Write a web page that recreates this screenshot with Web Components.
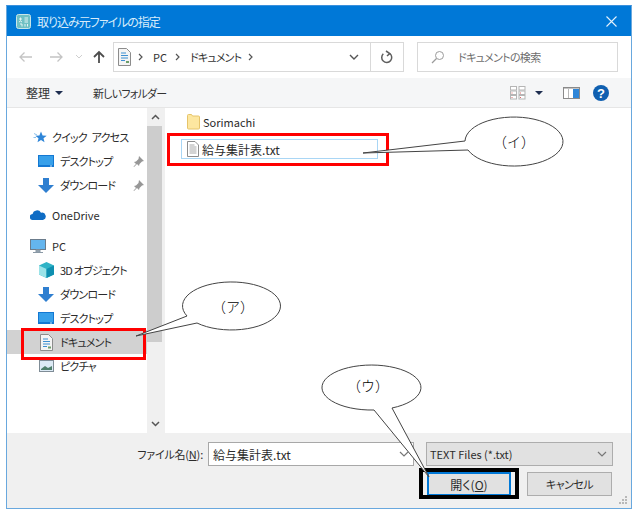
<!DOCTYPE html>
<html lang="ja">
<head>
<meta charset="utf-8">
<title>取り込み元ファイルの指定</title>
<style>
  html, body { margin: 0; padding: 0; background: #fff; }
  body { width: 637px; height: 516px; overflow: hidden; font-family: "Noto Sans CJK JP", "Noto Sans", sans-serif; }
</style>
</head>
<body>
<open-dialog>
  <title-bar slot="title">取り込み元ファイルの指定</title-bar>
  <nav-bar slot="nav"></nav-bar>
  <tool-bar slot="tools"></tool-bar>
  <side-nav slot="side"></side-nav>
  <file-list slot="files"></file-list>
  <dialog-footer slot="footer"></dialog-footer>

  <mark-box slot="over" style="left:21px;top:328px;width:125px;height:32px"></mark-box>
  <mark-box slot="over" style="left:167px;top:133px;width:222px;height:33px"></mark-box>
  <mark-box slot="over" color="#000" size="4" style="left:419px;top:468px;width:100px;height:31px"></mark-box>

  <call-out slot="over" d="M187 316 A49 24 0 1 1 197 323 L136 336 Z" tx="233" ty="306">（ア）</call-out>
  <call-out slot="over" d="M465 141 A49 24.500 0 1 1 468 150 L363 153 Z" tx="514" ty="141">（イ）</call-out>
  <call-out slot="over" d="M392 408 A49.500 22.500 0 1 0 374 410 L429 477 Z" tx="368" ty="385">（ウ）</call-out>
</open-dialog>

<script>
const UI_FONT = `"Noto Sans CJK JP", "Noto Sans", sans-serif`;

class OpenDialog extends HTMLElement {
  constructor() {
    super();
    this.attachShadow({ mode: "open" });
    this.shadowRoot.innerHTML = `
      <style>
        :host {
          display: grid;
          grid-template-rows: 30px 42px 30px 325px 75px;
          grid-template-columns: 140px 1fr;
          box-sizing: border-box;
          width: 626px;
          height: 504px;
          margin: 5px 0 0 6px;
          border: 1px solid #69a8de;
          border-top: 1px solid #3b90dc;
          background: #fff;
          font: 12px ${UI_FONT};
          font-feature-settings: "palt";
          color: #2b2b2b;
        }
        .wide { grid-column: 1 / 3; }
        #over { position: absolute; left: 0; top: 0; }
      </style>
      <div class="wide"><slot name="title"></slot></div>
      <div class="wide"><slot name="nav"></slot></div>
      <div class="wide"><slot name="tools"></slot></div>
      <div><slot name="side"></slot></div>
      <div><slot name="files"></slot></div>
      <div class="wide"><slot name="footer"></slot></div>
      <div id="over"><slot name="over"></slot></div>
    `;
  }
}

class TitleBar extends HTMLElement {
  constructor() {
    super();
    this.attachShadow({ mode: "open" });
    this.shadowRoot.innerHTML = `
      <style>
        :host {
          display: flex;
          align-items: center;
          height: 30px;
          padding: 0 13px 0 9px;
          background: #0078d7;
          color: #d8ecfa;
          font-size: 12px;
          letter-spacing: -1px;
        }
        svg { display: block; }
        .text { margin-left: 6px; flex: 1; }
      </style>
      <svg width="15" height="15" viewBox="0 0 15 15">
        <rect x=".5" y=".5" width="14" height="14" rx="2" fill="#6fc0c4" stroke="#c9e6e8"/>
        <path d="M3 5h3M4.500 3.500v3M3 8l1.500-1 1.500 1M8.500 4h3.500M8.500 6h3.500M8.500 8h3.500M4 10h2v2.500M9 10v2.500M11.500 10v2.500" stroke="#e4f4f3" fill="none"/>
      </svg>
      <span class="text"><slot></slot></span>
      <svg width="13" height="13" viewBox="0 0 13 13"><path d="M1.500 1.500l10 10M11.500 1.500l-10 10" stroke="#e6f2fb" stroke-width="1.100"/></svg>
    `;
  }
}

class NavBar extends HTMLElement {
  constructor() {
    super();
    this.attachShadow({ mode: "open" });
    const sep = `<svg class="sep" width="6" height="8" viewBox="0 0 6 8"><path d="M1 1l3 3-3 3" stroke="#555" fill="none" stroke-width="1.200"/></svg>`;
    this.shadowRoot.innerHTML = `
      <style>
        :host {
          display: flex;
          align-items: center;
          height: 42px;
          padding-left: 11px;
          background: #fff;
          box-sizing: border-box;
          font-size: 11px;
          letter-spacing: -.8px;
        }
        svg { display: block; flex: none; }
        .box {
          display: flex;
          align-items: center;
          box-sizing: border-box;
          height: 30px;
          border: 1px solid #d9d9d9;
        }
        #addr { width: 291px; margin-left: 7px; padding-left: 4px; }
        .crumb { color: #333; }
        .pc { letter-spacing: 0; }
        .sep { margin: 0 9px 0 7px; }
        .grow { flex: 1; }
        .btn { display: flex; align-items: center; justify-content: center; height: 100%; }
        #drop { width: 32px; }
        #refresh { width: 32px; border-left: 1px solid #d9d9d9; height: 100%; }
        #search { width: 201px; margin-left: 13px; padding-left: 13px; color: #6d6d6d; letter-spacing: -.7px; }
        #search span { margin-left: 13px; }
      </style>
      <svg width="16" height="12" viewBox="0 0 16 12"><path d="M14 6H2M6.500 1.500L2 6l4.500 4.500" stroke="#c4c4c4" fill="none" stroke-width="1.300"/></svg>
      <svg style="margin-left:14px" width="16" height="12" viewBox="0 0 16 12"><path d="M2 6h12M9.500 1.500L14 6l-4.500 4.500" stroke="#c4c4c4" fill="none" stroke-width="1.300"/></svg>
      <svg style="margin-left:11px" width="8" height="6" viewBox="0 0 8 6"><path d="M1 1l3 3 3-3" stroke="#cfcfcf" fill="none"/></svg>
      <svg style="margin-left:9px" width="14" height="14" viewBox="0 0 14 14"><path d="M7 13V2M2 7l5-5 5 5" stroke="#4d4d4d" fill="none" stroke-width="1.800"/></svg>
      <div class="box" id="addr">
        <svg width="13" height="18" viewBox="0 0 13 18">
          <path d="M.5.500h8l4 4v13H.5z" fill="#f4f4f4" stroke="#8c8c8c"/>
          <path d="M3 5h5M3 7.500h7M3 10h7M3 12.500h4" stroke="#3d8fd1" stroke-width="1.100"/>
          <path d="M8 13h3v2H8z" fill="#6e9e6a"/>
        </svg>
        ${sep}<span class="crumb pc">PC</span><span style="width:1px"></span>${sep}<span class="crumb">ドキュメント</span>${sep}
        <span class="grow"></span>
        <div class="btn" id="drop"><svg width="10" height="6" viewBox="0 0 10 6"><path d="M1 1l4 4 4-4" stroke="#555" fill="none" stroke-width="1.400"/></svg></div>
        <div class="btn" id="refresh"><svg width="14" height="15" viewBox="0 0 14 15"><path d="M3.300 3.800a5 5 0 1 0 6.500-.3M6 1l3.800 2.500L7 6" stroke="#5e5e5e" fill="none" stroke-width="1.500"/></svg></div>
      </div>
      <div class="box" id="search">
        <svg width="14" height="14" viewBox="0 0 14 14"><circle cx="8.500" cy="5.500" r="4" stroke="#9b9b9b" fill="none"/><path d="M5.500 8.500L1 13" stroke="#9b9b9b" fill="none" stroke-width="1.200"/></svg>
        <span>ドキュメントの検索</span>
      </div>
    `;
  }
}

class ToolBar extends HTMLElement {
  constructor() {
    super();
    this.attachShadow({ mode: "open" });
    const caret = `<svg width="8" height="4" viewBox="0 0 8 4"><path d="M0 0h8L4 4z" fill="#1e2e50"/></svg>`;
    const cell = (x) => `<rect x="${x}" y=".5" width="6" height="3.500" fill="#fff" stroke="#b5b5b5"/><rect x="${x}" y="5" width="6" height="3.500" fill="#fff" stroke="#b5b5b5"/><rect x="${x}" y="9.500" width="6" height="3.500" fill="#fff" stroke="#b5b5b5"/><path d="M${x+1} 11.500h1M${x+1} 7h1" stroke="#d66"/>`;
    this.shadowRoot.innerHTML = `
      <style>
        :host {
          display: flex;
          align-items: center;
          height: 30px;
          padding: 0 22px 0 19px;
          background: #f5f6f7;
          border-bottom: 1px solid #e6e6e6;
          box-sizing: border-box;
          color: #333;
        }
        svg { display: block; flex: none; }
        .grow { flex: 1; }
        .narrow { font-size: 11px; letter-spacing: -.8px; }
      </style>
      <span>整理</span>
      <svg style="margin-left:5px" width="8" height="4" viewBox="0 0 8 4"><path d="M0 0h8L4 4z" fill="#1e2e50"/></svg>
      <span class="narrow" style="margin-left:30px">新しいフォルダー</span>
      <span class="grow"></span>
      <svg width="16" height="14" viewBox="0 0 16 14">${cell(.5)}${cell(9)}</svg>
      <span style="width:9px"></span>${caret}
      <svg style="margin-left:20px" width="17" height="12" viewBox="0 0 17 12"><rect x=".5" y=".5" width="16" height="11" fill="#fff" stroke="#8a8a8a"/><path d="M.5 1h16" stroke="#8a8a8a"/><rect x="10" y="2" width="6" height="9" fill="#2f86d8"/><rect x="5" y="2" width="1" height="9" fill="#b8b8b8"/></svg>
      <svg style="margin-left:13px" width="16" height="16" viewBox="0 0 16 16"><circle cx="8" cy="8" r="8" fill="#0f5fb0"/><text x="8" y="12.500" font-family="Liberation Sans" font-size="13" font-weight="700" text-anchor="middle" fill="#fff">?</text></svg>
    `;
  }
}

const SIDE_ICONS = {
  star: `<svg width="14" height="13" viewBox="0 0 14 13"><path d="M8 .5l1.600 3.900 4.100.3-3.200 2.600 1 4-3.500-2.200-3.500 2.200 1-4L2.300 4.700l4.100-.3z" fill="#2f86d8"/><path d="M1 2.500l3 1.500M.5 6.500L3 6.500" stroke="#8cc1ec"/></svg>`,
  desktop: `<svg width="16" height="12" viewBox="0 0 16 12"><rect width="16" height="12" fill="#1478d2"/><rect x="1" y="1" width="14" height="9" fill="#37a0ea"/><path d="M12 11h2" stroke="#bfe0f7"/></svg>`,
  down: `<svg width="16" height="15" viewBox="0 0 16 15"><path d="M5 0h6v7h5l-8 8-8-8h5z" fill="#2f7fd0"/></svg>`,
  cloud: `<svg width="16" height="10" viewBox="0 0 16 10"><path d="M3 10a3 3 0 0 1-.4-6A4.500 4.500 0 0 1 11 2.800 3.500 3.500 0 0 1 13 10z" fill="#0f6cc4"/></svg>`,
  pc: `<svg width="16" height="15" viewBox="0 0 16 15"><rect x=".5" y=".5" width="15" height="10" fill="#64b5ee" stroke="#6b7c8c"/><path d="M6 11h4v2H6zM3 13.500h10" fill="#9aa8b3" stroke="#8a99a6"/></svg>`,
  cube: `<svg width="15" height="16" viewBox="0 0 15 16"><path d="M7.500 0L15 3.500v9L7.500 16 0 12.500v-9z" fill="#2fb3c6"/><path d="M0 3.500L7.500 7v9L0 12.500z" fill="#9be3e8"/><path d="M7.500 7L15 3.500v9L7.500 16z" fill="#0f8fb0"/></svg>`,
  doc: `<svg width="13" height="17" viewBox="0 0 13 17"><path d="M.5.500h8l4 4v12H.5z" fill="#f4f4f4" stroke="#8c8c8c"/><path d="M3 5h5M3 7.500h7M3 10h7M3 12.500h4" stroke="#3d8fd1" stroke-width="1.100"/><path d="M8 12.500h3v2H8z" fill="#6e9e6a"/></svg>`,
  pic: `<svg width="15" height="12" viewBox="0 0 15 12"><rect x=".5" y=".5" width="14" height="11" fill="#dceaf5" stroke="#7f8c96"/><path d="M2 9l4-3 3 2 4-2v4H2z" fill="#4f7f6c"/></svg>`,
};

class NavItem extends HTMLElement {
  constructor() {
    super();
    this.attachShadow({ mode: "open" });
  }
  connectedCallback() {
    const icon = SIDE_ICONS[this.getAttribute("icon")];
    const pin = this.hasAttribute("pin")
      ? `<svg class="pin" width="11" height="11" viewBox="0 0 11 11"><path d="M6 0l5 5-2 .5-2.500 2.500-.5 2-2-2L1 11l-.5-.5L3 8 1 6l2-.5L5.500 3z" fill="#979797"/></svg>`
      : "";
    this.shadowRoot.innerHTML = `
      <style>
        :host {
          display: flex;
          align-items: center;
          box-sizing: border-box;
          height: 24px;
          color: #2b2b2b;
          font-size: 11px;
          letter-spacing: -.8px;
        }
        :host([selected]) { background: #d2d2d2; }
        .icon { display: flex; justify-content: center; width: 18px; flex: none; }
        svg { display: block; }
        .label { margin-left: var(--label-gap, 5px); white-space: nowrap; flex: 1; }
        .pin { margin-right: 3px; }
      </style>
      <span class="icon">${icon}</span>
      <span class="label"><slot></slot></span>
      ${pin}
    `;
  }
}

class SideNav extends HTMLElement {
  constructor() {
    super();
    this.attachShadow({ mode: "open" });
    this.shadowRoot.innerHTML = `
      <style>
        :host {
          display: block;
          box-sizing: border-box;
          width: 140px;
          height: 325px;
          padding-top: 17px;
        }
        .l1 { padding-left: 22px; }
        .l2 { padding-left: 30px; }
        .latin { letter-spacing: 0; }
        .gap { height: 6px; }
        #quick { padding-left: 24px; --label-gap: 3px; word-spacing: 3px; }
      </style>
      <nav-item id="quick" icon="star">クイック アクセス</nav-item>
      <nav-item class="l2" icon="desktop" pin>デスクトップ</nav-item>
      <nav-item class="l2" icon="down" pin>ダウンロード</nav-item>
      <div class="gap"></div>
      <nav-item class="l1 latin" icon="cloud">OneDrive</nav-item>
      <div class="gap" style="height:7px"></div>
      <nav-item class="l1 latin" icon="pc">PC</nav-item>
      <nav-item class="l2" icon="cube">3D オブジェクト</nav-item>
      <nav-item class="l2" icon="down">ダウンロード</nav-item>
      <nav-item class="l2" icon="desktop">デスクトップ</nav-item>
      <nav-item class="l2" icon="doc" selected>ドキュメント</nav-item>
      <nav-item class="l2" icon="pic">ピクチャ</nav-item>
    `;
  }
}

class FileList extends HTMLElement {
  constructor() {
    super();
    this.attachShadow({ mode: "open" });
    this.shadowRoot.innerHTML = `
      <style>
        :host {
          display: flex;
          box-sizing: border-box;
          height: 325px;
        }
        #scroll {
          display: flex;
          flex-direction: column;
          width: 17px;
          flex: none;
          background: #f0f0f0;
        }
        #scroll .end { display: flex; align-items: center; justify-content: center; height: 18px; flex: none; }
        #scroll .thumb { height: 216px; width: 15px; background: #cdcdcd; flex: none; }
        #scroll .track { flex: 1; }
        svg { display: block; flex: none; }
        #rows { flex: 1; padding: 4px 0 0 16px; background: #fff; border-left: 1px solid #f0f0f0; }
        .row {
          display: flex;
          align-items: center;
          box-sizing: border-box;
          height: 20px;
          padding-left: 6px;
          gap: 3px;
        }
        .name { font-size: 11px; }
        #picked {
          width: 197px;
          margin-top: 7px;
          border: 1px solid #a9d6f5;
          padding-left: 5px;
          gap: 3px;
        }
      </style>
      <div id="scroll">
        <div class="end"><svg width="9" height="6" viewBox="0 0 9 6"><path d="M1 5l3.500-3.500L8 5" stroke="#555" fill="none" stroke-width="1.500"/></svg></div>
        <div class="thumb"></div>
        <div class="track"></div>
        <div class="end"><svg width="9" height="6" viewBox="0 0 9 6"><path d="M1 1l3.500 3.500L8 1" stroke="#555" fill="none" stroke-width="1.500"/></svg></div>
      </div>
      <div id="rows">
        <div class="row">
          <svg width="13" height="16" viewBox="0 0 13 16"><path d="M.5 1.500a1 1 0 0 1 1-1h3l1 1.500h6a1 1 0 0 1 1 1v11a1 1 0 0 1-1 1h-10a1 1 0 0 1-1-1z" fill="#fde7a0" stroke="#e6c46a"/></svg>
          <span class="name">Sorimachi</span>
        </div>
        <div class="row" id="picked">
          <svg width="12" height="16" viewBox="0 0 12 16"><path d="M.5.500h7.500l3.500 3.500v11.500H.5z" fill="#fff" stroke="#8d8d8d"/><path d="M2.500 4h5M2.500 6h7M2.500 8h7M2.500 10h7M2.500 12h7" stroke="#a8a8a8"/></svg>
          <span>給与集計表.txt</span>
        </div>
      </div>
    `;
  }
}

class DialogFooter extends HTMLElement {
  constructor() {
    super();
    this.attachShadow({ mode: "open" });
    const chev = `<svg width="10" height="6" viewBox="0 0 10 6"><path d="M1 1l4 4 4-4" stroke="#777" fill="none" stroke-width="1.200"/></svg>`;
    this.shadowRoot.innerHTML = `
      <style>
        :host {
          display: block;
          box-sizing: border-box;
          height: 75px;
          padding-top: 9px;
          background: #f0f0f0;
          position: relative;
        }
        .line { display: flex; align-items: center; height: 24px; }
        .label {
          width: 201px;
          text-align: right;
          box-sizing: border-box;
          padding-right: 5px;
          font-size: 11px;
          letter-spacing: -.2px;
        }
        u { text-underline-offset: 1px; }
        .field {
          display: flex;
          align-items: center;
          justify-content: space-between;
          box-sizing: border-box;
          height: 24px;
          padding: 0 4px;
        }
        #name { width: 206px; background: #fff; border: 1px solid #a8a8a8; }
        #type { width: 187px; margin-left: 12px; background: #e1e1e1; border: 1px solid #adadad; padding: 0 5px 0 3px; font-size: 11px; }
        .buttons { display: flex; height: 24px; margin: 6px 0 0 420px; gap: 16px; }
        .buttons div {
          display: flex;
          align-items: center;
          justify-content: center;
          box-sizing: border-box;
          width: 84px;
          height: 24px;
          background: #e1e1e1;
          border: 1px solid #adadad;
        }
        .buttons #ok { border: 2px solid #0078d7; }
        .buttons #cancel { font-size: 11px; letter-spacing: -.5px; width: 85px; }
        #grip { position: absolute; right: 3px; bottom: 3px; display: block; }
      </style>
      <div class="line">
        <span class="label">ファイル名(<u>N</u>):</span>
        <div class="field" id="name"><span>給与集計表.txt</span>${chev}</div>
        <div class="field" id="type"><span>TEXT Files (*.txt)</span>${chev}</div>
      </div>
      <div class="buttons">
        <div id="ok"><span>開く(<u>O</u>)</span></div>
        <div id="cancel">キャンセル</div>
      </div>
      <svg id="grip" width="9" height="9" viewBox="0 0 9 9" fill="#b8b8b8"><path d="M6 0h2v2H6zM3 3h2v2H3zM6 3h2v2H6zM0 6h2v2H0zM3 6h2v2H3zM6 6h2v2H6z"/></svg>
    `;
  }
}

class MarkBox extends HTMLElement {
  constructor() {
    super();
    this.attachShadow({ mode: "open" });
  }
  connectedCallback() {
    const color = this.getAttribute("color") || "#f00";
    const size = this.getAttribute("size") || "3";
    this.shadowRoot.innerHTML = `
      <style>
        :host {
          position: absolute;
          box-sizing: border-box;
          border: ${size}px solid ${color};
        }
      </style>
    `;
  }
}

class CallOut extends HTMLElement {
  constructor() {
    super();
    this.attachShadow({ mode: "open" });
  }
  connectedCallback() {
    this.shadowRoot.innerHTML = `
      <style>
        :host { position: absolute; left: 0; top: 0; width: 0; height: 0; }
        svg { position: absolute; left: 0; top: 0; overflow: visible; }
        text { font: 300 14px "Noto Sans CJK JP", sans-serif; fill: #000; }
      </style>
      <svg width="637" height="516" viewBox="0 0 637 516">
        <path d="${this.getAttribute("d")}" fill="#fff" stroke="#444"/>
        <text x="${this.getAttribute("tx")}" y="${this.getAttribute("ty")}" text-anchor="middle" dominant-baseline="central">${this.textContent}</text>
      </svg>
    `;
  }
}

customElements.define("open-dialog", OpenDialog);
customElements.define("title-bar", TitleBar);
customElements.define("nav-bar", NavBar);
customElements.define("tool-bar", ToolBar);
customElements.define("nav-item", NavItem);
customElements.define("side-nav", SideNav);
customElements.define("file-list", FileList);
customElements.define("dialog-footer", DialogFooter);
customElements.define("mark-box", MarkBox);
customElements.define("call-out", CallOut);
</script>
</body>
</html>
